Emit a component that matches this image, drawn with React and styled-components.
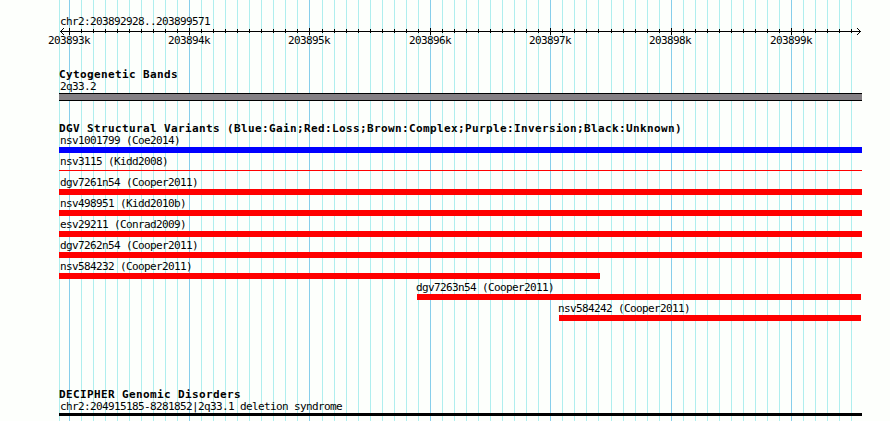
import React from "react";
import styled, { createGlobalStyle } from "styled-components";

const GlobalStyle = createGlobalStyle`
  body { margin: 0; background: #fdfffc; }
`;

const Browser = styled.main`
  position: relative;
  box-sizing: border-box;
  width: 890px;
  height: 421px;
  overflow: hidden;
  padding-left: 59px;
  display: flex;
  flex-direction: column;
  background: #fdfffc;
  color: #000;
`;

const GridLines = styled.svg`
  position: absolute;
  inset: 0;
`;

const Label = styled.div`
  position: relative;
  height: 15px;
  padding-left: 1px;
  font: 11px/17px "DejaVu Sans Mono", monospace;
  letter-spacing: -0.6226px;
  white-space: pre;
`;

const Title = styled.h2`
  position: relative;
  margin: 0;
  height: 10px;
  font: bold 11px/14px "DejaVu Sans Mono", monospace;
  letter-spacing: 0.3774px;
  white-space: pre;
`;

const Ruler = styled.header`
  position: relative;
  height: 68px;
  box-sizing: border-box;
  padding-top: 13px;
`;

const Axis = styled.svg`
  display: block;
  height: 7px;
`;

const TickLabels = styled.div`
  display: grid;
  grid-template-columns: 120px 120px 121px 120px 120px 121px 42px;
  margin: -3px 0 0 -12px;
`;

const Track = styled.section`
  position: relative;
  height: ${(p) => p.$height}px;
  flex: none;
`;

const Band = styled.div`
  box-sizing: border-box;
  width: 803px;
  height: 8px;
  border: solid #000;
  border-width: 1px 0;
  background: #848084;
`;

const Feature = styled.div`
  height: 21px;
  margin-left: ${(p) => p.$start}px;
`;

const FeatureLabel = styled(Label)`
  padding-left: ${(p) => (p.$inset ? 1 : 0)}px;
  margin-left: ${(p) => (p.$inset ? 0 : -1)}px;
`;

const Bar = styled.div`
  position: relative;
  width: ${(p) => p.$width}px;
  height: ${(p) => p.$thickness || 6}px;
  margin-top: ${(p) => (p.$thickness === 1 ? 2 : 0)}px;
  background: ${(p) => p.$color};
`;

const ticks = Array.from({ length: 66 }, (_, i) => ({
  x: 69 + 12 * i + (i >= 21 ? 1 : 0) + (i >= 45 ? 1 : 0),
  major: i % 10 === 0,
}));

const positions = ["203893k", "203894k", "203895k", "203896k", "203897k", "203898k", "203899k"];

const variants = [
  { name: "nsv1001799 (Coe2014)", color: "#00f" },
  { name: "nsv3115 (Kidd2008)", thickness: 1 },
  { name: "dgv7261n54 (Cooper2011)" },
  { name: "nsv498951 (Kidd2010b)" },
  { name: "esv29211 (Conrad2009)" },
  { name: "dgv7262n54 (Cooper2011)" },
  { name: "nsv584232 (Cooper2011)", width: 541 },
  { name: "dgv7263n54 (Cooper2011)", start: 358, width: 444 },
  { name: "nsv584242 (Cooper2011)", start: 500, width: 302 },
];

export default function App() {
  return (
    <Browser>
      <GlobalStyle />
      <GridLines width="890" height="421" shapeRendering="crispEdges">
        <rect x="59" y="0" width="1" height="421" fill="#afeeee" />
        {ticks.map((t) => (
          <rect key={t.x} x={t.x} y="0" width="1" height="421" fill={t.major ? "#87ceeb" : "#afeeee"} />
        ))}
      </GridLines>
      <Ruler>
        <Label>chr2:203892928..203899571</Label>
        <Axis width="803" height="7" viewBox="59 28 803 7" shapeRendering="crispEdges">
          <rect x="60" y="31" width="801" height="1" />
          {ticks.map((t) => (
            <rect key={t.x} x={t.x} y={t.major ? 28 : 29} width="1" height={t.major ? 7 : 4} />
          ))}
          {[1, 2, 3].map((d) => (
            <g key={d}>
              <rect x={60 + d} y={31 - d} width="1" height="1" />
              <rect x={60 + d} y={31 + d} width="1" height="1" />
              <rect x={860 - d} y={31 - d} width="1" height="1" />
              <rect x={860 - d} y={31 + d} width="1" height="1" />
            </g>
          ))}
        </Axis>
        <TickLabels>
          {positions.map((p) => <Label key={p}>{p}</Label>)}
        </TickLabels>
      </Ruler>
      <Track $height={54}>
        <Title>Cytogenetic Bands</Title>
        <Label>2q33.2</Label>
        <Band />
      </Track>
      <Track $height={266}>
        <Title>DGV Structural Variants (Blue:Gain;Red:Loss;Brown:Complex;Purple:Inversion;Black:Unknown)</Title>
        {variants.map((v) => (
          <Feature key={v.name} $start={v.start || 0}>
            <FeatureLabel $inset={!v.start}>{v.name}</FeatureLabel>
            <Bar $width={v.width || 803} $thickness={v.thickness} $color={v.color || "#f00"} />
          </Feature>
        ))}
      </Track>
      <Track $height={33}>
        <Title>DECIPHER Genomic Disorders</Title>
        <Label>chr2:204915185-8281852|2q33.1 deletion syndrome</Label>
        <Bar $width={803} $thickness={3} $color="#000" />
      </Track>
    </Browser>
  );
}
